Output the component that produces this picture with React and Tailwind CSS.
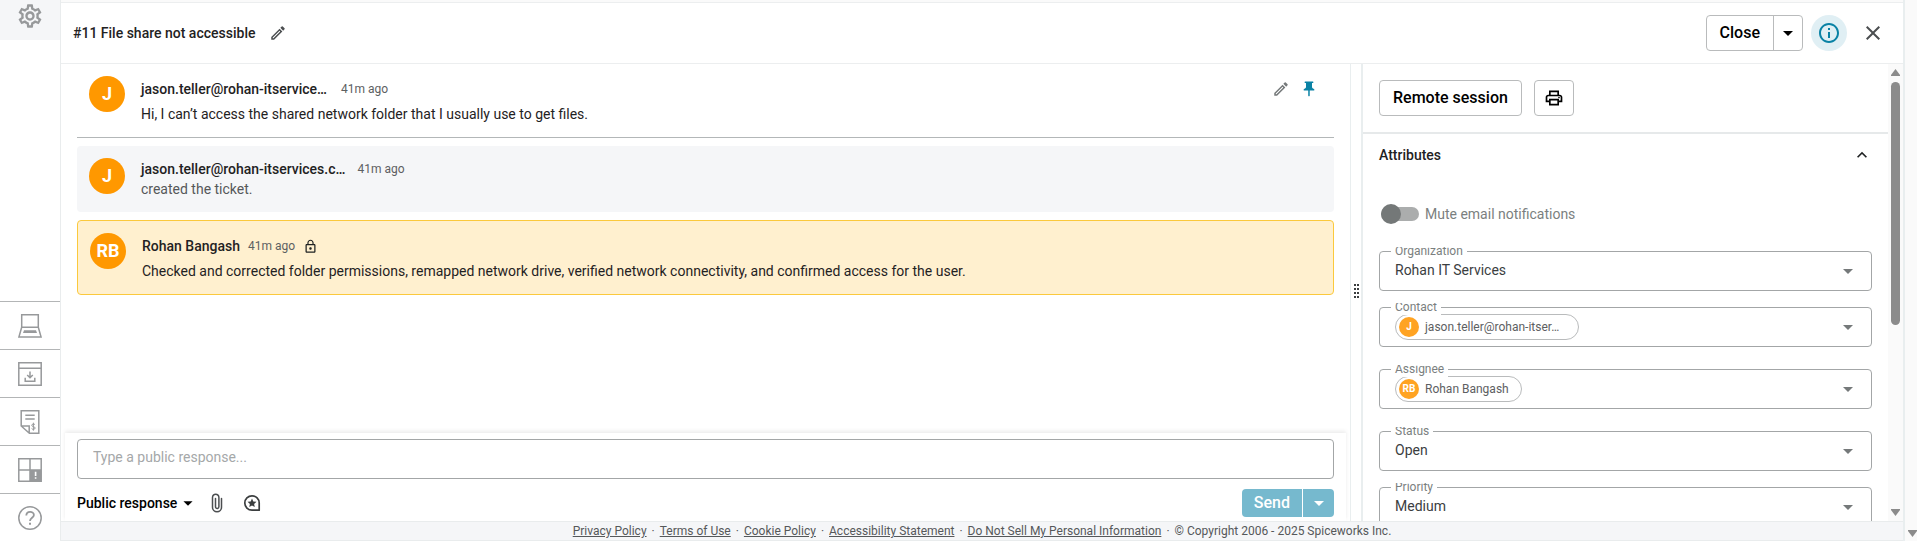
import React from "react";
import {
  MdOutlineModeEdit, MdPushPin, MdOutlinePrint, MdLockOutline, MdOutlineInfo, MdClose,
  MdArrowDropDown, MdKeyboardArrowUp, MdOutlineSettings,
} from "react-icons/md";

function LaptopIcon() {
  return (
    <svg viewBox="0 0 24 24" className="size-6" fill="none" stroke="currentColor" strokeWidth="1.5">
      <path d="M3.7 .8h16.6v12.4H3.7zM3.7 13.2L.9 23.1h22.2l-2.8-9.9" />
      <path d="M6 16.2h12l1 2.8H5z" fill="currentColor" stroke="none" />
    </svg>
  );
}

function DownloadWindowIcon() {
  return (
    <svg viewBox="0 0 24 24" className="size-6" fill="none" stroke="currentColor" strokeWidth="1.5">
      <path d="M.8 .8h22.4v22.4H.8zM.8 6.3h22.4" />
      <path d="M7.2 15.8v3.5h9.6v-3.5M12 9.5v6M9.2 13l2.8 2.8 2.8-2.8" />
    </svg>
  );
}

function InvoiceIcon() {
  return (
    <svg viewBox="0 0 24 24" className="size-6" fill="none" stroke="currentColor" strokeWidth="1.5">
      <path d="M3.2 .8h17.600v22.400h-9.400L3.200 16zM3.200 16h8v7M7.300 5.300h9.400M7.300 9h9.400" />
      <path d="M17 14.800c-.4-1-3.300-1.100-3.300.5s3.500 1.100 3.500 2.700-3.200 1.700-3.600.5M15.400 12.700v8" strokeWidth="1" />
    </svg>
  );
}

function AlertGridIcon() {
  return (
    <svg viewBox="0 0 24 24" className="size-6" fill="none" stroke="currentColor" strokeWidth="1.5">
      <path d="M.8 .8h22.400v22.400H.8zM12 .8v22.400M.8 12h22.400" />
      <path d="M12 12h11.200v11.200H12z" fill="currentColor" stroke="none" />
      <path d="M17.600 13.800v4.200M17.600 19.200v1.600" stroke="white" strokeWidth="1.600" />
    </svg>
  );
}

function HelpIcon() {
  return (
    <svg viewBox="0 0 24 24" className="size-6" fill="none" stroke="currentColor" strokeWidth="1.500">
      <circle cx="12" cy="12" r="11.200" />
      <path d="M8.300 9.600c0-5 7.600-4.800 7.600-.6 0 2.700-3.900 3-3.900 6.100" strokeWidth="1.800" />
      <path d="M12 16.800v2" strokeWidth="2" />
    </svg>
  );
}

function PaperclipIcon() {
  return (
    <svg viewBox="0 0 20 20" className="size-5" fill="none" stroke="currentColor" strokeWidth="1.500" strokeLinecap="round">
      <path d="M14.500 5.500v8.800a4.500 4.500 0 0 1-9 0V4.400a3.200 3.200 0 0 1 6.400 0v9.400a1.700 1.700 0 0 1-3.400 0V5.500" />
    </svg>
  );
}

function ChatStarIcon() {
  return (
    <svg viewBox="0 0 18 18" className="size-[18px]" fill="none" stroke="currentColor" strokeWidth="1.700">
      <path d="M16.200 9A7.200 7.200 0 1 0 9 16.200h7.200z" strokeLinejoin="round" />
      <path d="M9 4.600l1.300 2.900 3.200.3-2.400 2.100.7 3.200L9 11.500l-2.800 1.600.7-3.200-2.400-2.100 3.200-.3z" fill="currentColor" stroke="none" />
    </svg>
  );
}

function Avatar({ children }) {
  return (
    <span className="flex size-9 shrink-0 items-center justify-center rounded-full bg-[#ff9800] text-lg font-bold text-white">
      {children}
    </span>
  );
}

function Chip({ initials, name, wide }) {
  return (
    <span className={`flex h-[26px] items-center gap-1.5 rounded-full border border-[#b9bbbc] pr-3 pl-[3px] text-xs whitespace-nowrap text-[#5d6062] ${wide ? "w-[184px]" : ""}`}>
      <span className="flex size-5 items-center justify-center rounded-full bg-[#ffa322] text-[10px] font-bold text-white">
        {initials}
      </span>
      <span>{name}</span>
    </span>
  );
}

function FieldLabel({ htmlFor, children }) {
  return (
    <label htmlFor={htmlFor} className="absolute -top-1 left-3 flex h-3 items-start overflow-hidden bg-white px-1 text-xs leading-[8px] text-[#7b7f80]">
      {children}
    </label>
  );
}

const box = "h-10 w-full rounded border border-[#a3a6a7] bg-white";

function SelectField({ id, label, options }) {
  return (
    <div className="relative grid shrink-0 grid-cols-1 items-center">
      <select id={id} className={`${box} col-start-1 row-start-1 appearance-none px-[15px] pb-0.5 text-sm text-[#3b3e3f]`}>
        {options.map((o) => <option key={o}>{o}</option>)}
      </select>
      <MdArrowDropDown className="pointer-events-none col-start-1 row-start-1 mr-3 size-6 justify-self-end text-[#75797a]" />
      <FieldLabel htmlFor={id}>{label}</FieldLabel>
    </div>
  );
}

function PersonField({ id, label, initials, name, wide }) {
  return (
    <div className="relative shrink-0">
      <button type="button" id={id} className={`${box} flex items-center justify-between pr-[11px] pl-[15px]`}>
        <Chip initials={initials} name={name} wide={wide} />
        <MdArrowDropDown className="size-6 text-[#75797a]" />
      </button>
      <FieldLabel htmlFor={id}>{label}</FieldLabel>
    </div>
  );
}

function Sidebar() {
  const items = [
    ["Devices", LaptopIcon], ["Software", DownloadWindowIcon], ["Purchases", InvoiceIcon],
    ["Alerts", AlertGridIcon], ["Help", HelpIcon],
  ];
  return (
    <nav className="flex w-[61px] shrink-0 flex-col justify-between border-r border-[#e9eced] text-[#97999b]">
      <a href="#settings" aria-label="Settings" className="flex h-10 items-start justify-center bg-[#f5f6f8] pt-0.5">
        <MdOutlineSettings className="size-7" />
      </a>
      <div>
        {items.map(([name, Icon]) => (
          <a key={name} href={`#${name.toLowerCase()}`} aria-label={name} className="flex h-12 items-center justify-center border-t border-[#b3b5b6]">
            <Icon />
          </a>
        ))}
      </div>
    </nav>
  );
}

function TicketHeader() {
  return (
    <header className="mt-0.5 flex h-[62px] shrink-0 items-center border-y border-[#eceeef] bg-white pr-[18px] pl-3">
      <h1 className="text-sm font-medium text-[#1f2223]">#11 File share not accessible</h1>
      <button type="button" aria-label="Edit title" className="ml-3.5 text-[#4b4e50]"><MdOutlineModeEdit className="size-[18px]" /></button>
      <div className="ml-auto flex h-9 rounded border border-[#b9bbbc] text-black">
        <button type="button" className="px-[13px] text-base font-medium">Close</button>
        <button type="button" aria-label="More close options" className="flex w-[29px] items-center justify-center border-l border-[#b9bbbc]">
          <MdArrowDropDown className="size-6" />
        </button>
      </div>
      <button type="button" aria-label="Ticket details" className="ml-2 flex size-9 items-center justify-center rounded-full bg-[#e0eff4] text-[#0a82a5]">
        <MdOutlineInfo className="size-6" />
      </button>
      <button type="button" aria-label="Close panel" className="ml-3.5 text-[#4b4e50]"><MdClose className="size-6" /></button>
    </header>
  );
}

function Messages() {
  return (
    <div className="flex min-h-0 flex-1 flex-col gap-2 overflow-hidden px-4">
      <article className="flex h-[74px] shrink-0 gap-4 border-b border-[#b3b7b8] pt-3 pl-3">
        <Avatar>J</Avatar>
        <div className="min-w-0 flex-1">
          <div className="flex h-[26px] items-center">
            <b className="text-sm font-medium">jason.teller@rohan-itservice…</b>
            <time className="ml-3.5 text-xs text-[#5d6062]">41m ago</time>
            <button type="button" aria-label="Edit message" className="ml-auto text-[#75797a]"><MdOutlineModeEdit className="size-[18px]" /></button>
            <button type="button" aria-label="Unpin message" className="mr-4 ml-2.5 text-[#0a82a5]"><MdPushPin className="size-[18px]" /></button>
          </div>
          <p className="text-sm leading-6">Hi, I can’t access the shared network folder that I usually use to get files.</p>
        </div>
      </article>
      <article className="flex h-[66px] shrink-0 gap-4 rounded bg-[#f5f6f8] pt-3 pl-3">
        <Avatar>J</Avatar>
        <div>
          <div className="flex h-[21px] items-center">
            <b className="text-sm font-medium">jason.teller@rohan-itservices.c…</b>
            <time className="ml-3 text-xs text-[#5d6062]">41m ago</time>
          </div>
          <p className="text-sm leading-5 text-[#55585a]">created the ticket.</p>
        </div>
      </article>
      <article className="flex h-[75px] shrink-0 gap-4 rounded border border-[#fbc93d] bg-[#fff0cf] pt-3 pl-3">
        <Avatar>RB</Avatar>
        <div>
          <div className="flex h-[26px] items-center">
            <b className="text-sm font-medium">Rohan Bangash</b>
            <time className="ml-2 text-xs text-[#5d6062]">41m ago</time>
            <MdLockOutline className="ml-2 size-[15px]" />
          </div>
          <p className="text-sm leading-6">Checked and corrected folder permissions, remapped network drive, verified network connectivity, and confirmed access for the user.</p>
        </div>
      </article>
    </div>
  );
}

function Composer() {
  return (
    <form className="mx-1 shrink-0 px-3 pt-1.5 pb-1 shadow-[0_-2px_4px_rgba(0,0,0,0.08)]">
      <input aria-label="Public response" placeholder="Type a public response..." className="block h-10 w-full rounded border border-[#a3a6a7] px-[15px] pb-1 text-sm placeholder:text-[#a5a8a9]" />
      <div className="mt-2.5 flex h-7 items-center">
        <button type="button" className="flex items-center text-sm font-medium text-black">
          Public response<MdArrowDropDown className="size-[22px]" />
        </button>
        <button type="button" aria-label="Attach file" className="ml-2 text-[#4b4e50]"><PaperclipIcon /></button>
        <button type="button" aria-label="Canned responses" className="ml-4 text-[#3b3e3f]"><ChatStarIcon /></button>
        <div className="ml-auto flex h-7 overflow-hidden rounded text-white">
          <button type="submit" className="bg-[#76b9ce] px-3 text-base font-medium">Send</button>
          <button type="button" aria-label="More send options" className="ml-px flex w-[31px] items-center justify-center bg-[#76b9ce]">
            <MdArrowDropDown className="size-6" />
          </button>
        </div>
      </div>
    </form>
  );
}

function Splitter() {
  return (
    <div role="separator" aria-orientation="vertical" className="flex w-[13px] shrink-0 items-center justify-center border-r-2 border-l border-[#e9eeef] pb-1">
      <svg viewBox="0 0 5 14" className="h-3.5 w-[5px]" fill="#3b3e3f">
        {[0, 4, 8, 12].map((y) => (
          <g key={y}><rect x="0" y={y} width="2" height="2" /><rect x="3" y={y} width="2" height="2" /></g>
        ))}
      </svg>
    </div>
  );
}

const outlined = "flex h-9 items-center rounded border border-[#b9bbbc] bg-white text-base font-medium text-black";

function Details() {
  return (
    <aside className="flex w-[540px] shrink-0">
      <div className="flex min-w-0 flex-1 flex-col overflow-hidden">
        <div className="flex h-[70px] shrink-0 items-center gap-3 border-b-2 border-[#e6e9ea] px-4">
          <button type="button" className={`${outlined} px-[13px]`}>Remote session</button>
          <button type="button" aria-label="Print" className={`${outlined} px-[9px]`}><MdOutlinePrint className="size-5" /></button>
        </div>
        <button type="button" aria-expanded="true" className="flex h-[42px] shrink-0 items-center justify-between pr-4 pl-4 text-sm font-medium">
          Attributes<MdKeyboardArrowUp className="size-5" />
        </button>
        <label className="mt-[26px] ml-[18px] flex h-6 shrink-0 items-center gap-1.5 text-sm text-[#7b7f80]">
          <input type="checkbox" role="switch" className="peer sr-only" />
          <span className="flex h-3.5 w-[38px] items-center rounded-full bg-[#abadad]">
            <span className="size-5 shrink-0 rounded-full bg-[#747878]" />
          </span>
          Mute email notifications
        </label>
        <div className="mt-[25px] flex flex-col gap-[22px] px-4">
          <div className="flex flex-col gap-4">
            <SelectField id="organization" label="Organization" options={["Rohan IT Services"]} />
            <PersonField id="contact" label="Contact" initials="J" name="jason.teller@rohan-itser…" wide />
          </div>
          <PersonField id="assignee" label="Assignee" initials="RB" name="Rohan Bangash" />
          <div className="flex flex-col gap-4">
            <SelectField id="status" label="Status" options={["Open", "Closed"]} />
            <SelectField id="priority" label="Priority" options={["Medium", "Low", "High"]} />
          </div>
        </div>
      </div>
      <div aria-hidden="true" className="flex w-[15px] flex-col items-center bg-[#fafafa] py-[5px] text-[#8b8b8b]">
        <svg viewBox="0 0 9 7" className="h-[7px] w-[9px] shrink-0" fill="currentColor"><path d="M4.500 0L9 6v1H0V6z" /></svg>
        <div className="mt-1.5 flex w-[9px] flex-1 flex-col"><div className="h-[57%] rounded-full bg-[#8b8b8b]" /></div>
        <svg viewBox="0 0 9 7" className="h-[7px] w-[9px] shrink-0" fill="currentColor"><path d="M4.500 7L9 1V0H0v1z" /></svg>
      </div>
    </aside>
  );
}

function Footer() {
  const links = ["Privacy Policy", "Terms of Use", "Cookie Policy", "Accessibility Statement", "Do Not Sell My Personal Information"];
  return (
    <footer className="flex h-5 shrink-0 items-center justify-center gap-[5px] border-y border-[#e9eced] bg-[#f5f6f8] text-xs text-[#55585a]">
      {links.map((l) => (
        <React.Fragment key={l}><a href="#legal" className="underline">{l}</a><span>·</span></React.Fragment>
      ))}
      <span>© Copyright 2006 - 2025 Spiceworks Inc.</span>
    </footer>
  );
}

export default function App() {
  return (
    <div className="flex h-screen overflow-hidden bg-white font-[Roboto,sans-serif] text-[#1f2223]">
      <Sidebar />
      <div className="flex min-w-0 flex-1 flex-col border-r-2 border-[#e9eeef]">
        <div className="flex min-h-0 flex-1 flex-col bg-[#fafafa]">
          <TicketHeader />
          <div className="flex min-h-0 flex-1 bg-white">
            <main className="flex min-w-0 flex-1 flex-col"><Messages /><Composer /></main>
            <Splitter />
            <Details />
          </div>
        </div>
        <Footer />
      </div>
      <div aria-hidden="true" className="flex w-3 shrink-0 items-end justify-end bg-[#fafafa] pb-1">
        <svg viewBox="0 0 9 7" className="h-[7px] w-[9px]" fill="#8b8b8b"><path d="M4.500 7L9 1V0H0v1z" /></svg>
      </div>
    </div>
  );
}
